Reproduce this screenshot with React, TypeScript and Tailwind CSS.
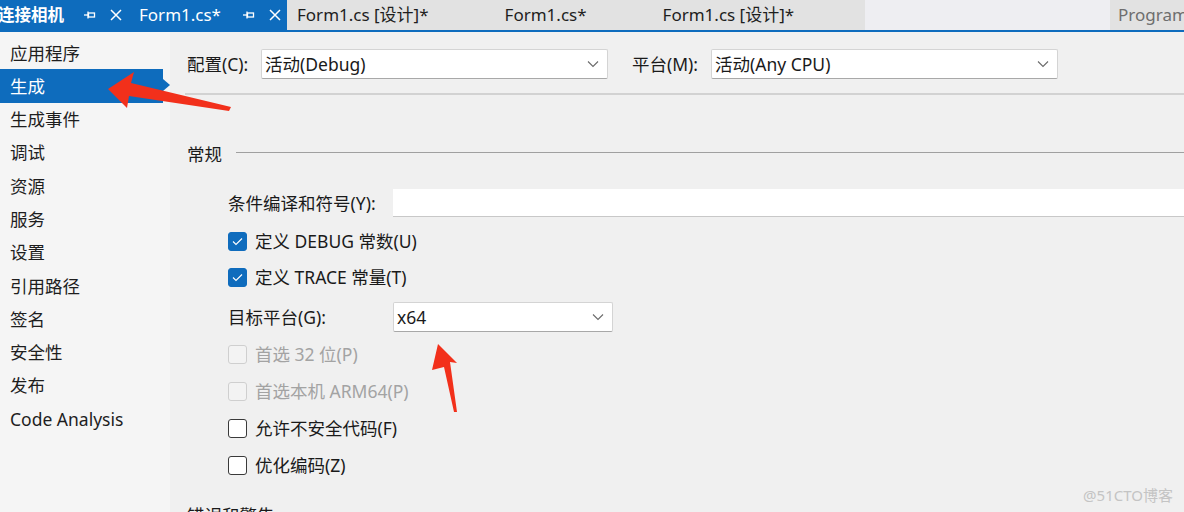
import React from "react";

const FONT = { fontFamily: '"Segoe UI", "Noto Sans", "Noto Sans CJK SC", sans-serif' };

function Pin({ color = "#fff" }: { color?: string }) {
  return (
    <svg width="12" height="10" viewBox="0 0 12 10" className="shrink-0">
      <line x1="0" y1="5" x2="4" y2="5" stroke={color} strokeWidth="1.3" />
      <line x1="4" y1="1.5" x2="4" y2="8.5" stroke={color} strokeWidth="1.3" />
      <rect x="4.5" y="3" width="6" height="4" fill="none" stroke={color} strokeWidth="1.3" />
    </svg>
  );
}

function Close({ color = "#fff" }: { color?: string }) {
  return (
    <svg width="12" height="12" viewBox="0 0 12 12" className="shrink-0">
      <path d="M1 1 L11 11 M11 1 L1 11" stroke={color} strokeWidth="1.5" />
    </svg>
  );
}

function Chevron() {
  return (
    <svg width="12" height="8" viewBox="0 0 12 8" className="shrink-0">
      <path d="M1 1.5 L6 6.5 L11 1.5" fill="none" stroke="#6a6a6a" strokeWidth="1.1" />
    </svg>
  );
}

function Select({ value, w }: { value: string; w: string }) {
  return (
    <div
      className={`${w} h-[30px] bg-white border border-[#d4d4d4] border-b-[#a8a8a8] rounded-[2px] flex items-center justify-between pl-[3px] pr-[8px] text-[17.5px] text-[#1a1a1a]`}
    >
      <span className="whitespace-nowrap">{value}</span>
      <Chevron />
    </div>
  );
}

type CbState = "checked" | "unchecked" | "disabled";

function Check({ state, label, h = "h-[37px]" }: { state: CbState; label: string; h?: string }) {
  let box = "";
  if (state === "checked") box = "bg-[#0f6cbd] border-[#0f6cbd]";
  else if (state === "unchecked") box = "bg-white border-[#3a3a3a]";
  else box = "bg-[#f3f3f3] border-[#cfcfcf]";
  return (
    <div className={`flex items-center ${h}`}>
      <div className={`w-[19px] h-[19px] rounded-[3px] border flex items-center justify-center ${box}`}>
        {state === "checked" && (
          <svg width="11" height="9" viewBox="0 0 11 9">
            <path d="M1 4.5 L4 7.5 L10 1.5" fill="none" stroke="#fff" strokeWidth="1.1" />
          </svg>
        )}
      </div>
      <span className={`ml-[8px] text-[17.5px] whitespace-nowrap ${state === "disabled" ? "text-[#a3a3a3]" : "text-[#1a1a1a]"}`}>
        {label}
      </span>
    </div>
  );
}

const navItems = ["应用程序", "生成", "生成事件", "调试", "资源", "服务", "设置", "引用路径", "签名", "安全性", "发布", "Code Analysis"];

export default function App() {
  return (
    <div className="relative w-[1184px] h-[512px] overflow-hidden bg-[#f0f0f0] flex flex-col" style={FONT}>
      {/* Tab bar */}
      <div className="h-[30px] flex items-stretch bg-[#eeeef2] shrink-0">
        <div className="bg-[#0e6cbd] flex items-center w-[130px] pr-[8px] text-white overflow-hidden">
          <span className="font-bold text-[16.5px] -ml-[2px] whitespace-nowrap">连接相机</span>
          <span className="ml-[20px]"><Pin /></span>
          <span className="ml-[14px]"><Close /></span>
        </div>
        <div className="bg-[#0e6cbd] flex items-center w-[157px] pl-[9px] text-white">
          <span className="text-[17px] whitespace-nowrap">Form1.cs*</span>
          <span className="ml-[22px]"><Pin /></span>
          <span className="ml-[14px]"><Close /></span>
        </div>
        <div className="bg-[#e2e2e2] flex items-center w-[578px] text-[17px] text-[#1e1e1e] whitespace-nowrap">
          <span className="ml-[10px]">Form1.cs [设计]*</span>
          <span className="ml-[76px]">Form1.cs*</span>
          <span className="ml-[76px]">Form1.cs [设计]*</span>
        </div>
        <div className="flex-1" />
        <div className="bg-[#e2e2e2] flex items-center w-[74px] pl-[8px] text-[17px] text-[#6e6e6e] whitespace-nowrap overflow-hidden">
          Program
        </div>
      </div>
      <div className="h-[2px] bg-[#0e6cbd] shrink-0" />

      {/* Body */}
      <div className="flex flex-1 min-h-0">
        {/* Sidebar */}
        <div className="w-[170px] bg-[#f5f5f5] pt-[4px] shrink-0">
          {navItems.map((it) => {
            const sel = it === "生成";
            return (
              <div key={it} className="relative h-[33.3px] flex items-center">
                {sel && (
                  <>
                    <div className="absolute left-0 top-0 bottom-0 w-[163px] bg-[#0e6cbd]" />
                    <div className="absolute left-[163px] top-[10px] w-0 h-0 border-y-[6px] border-y-transparent border-l-[7px] border-l-[#0e6cbd]" />
                  </>
                )}
                <span className={`relative pl-[10px] text-[17.5px] whitespace-nowrap ${sel ? "text-white" : "text-[#1e1e1e]"}`}>{it}</span>
              </div>
            );
          })}
        </div>

        {/* Main */}
        <div className="flex-1 min-w-0 pt-[17px]">
          <div className="flex items-center pl-[17px] text-[17.5px] text-[#1a1a1a]">
            <span className="w-[74px] whitespace-nowrap">配置(C):</span>
            <Select value="活动(Debug)" w="w-[347px]" />
            <span className="ml-[24px] w-[79px] whitespace-nowrap">平台(M):</span>
            <Select value="活动(Any CPU)" w="w-[347px]" />
          </div>
          <div className="ml-[15px] mt-[14px] h-[2px] bg-[#d2d2d2]" />

          <div className="flex items-center pl-[17px] mt-[46px] text-[17.5px] text-[#1a1a1a]">
            <span>常规</span>
            <div className="flex-1 h-px bg-[#a0a0a0] ml-[14px] -mt-[3px]" />
          </div>

          <div className="pl-[58px] mt-[22px]">
            <div className="flex items-center h-[28px] text-[17.5px] text-[#1a1a1a]">
              <span className="w-[165px] whitespace-nowrap">条件编译和符号(Y):</span>
              <div className="flex-1 h-[28px] bg-white border-b border-[#c8c8c8]" />
            </div>
            <div className="mt-[6px]">
              <Check state="checked" label="定义 DEBUG 常数(U)" h="h-[36px]" />
              <Check state="checked" label="定义 TRACE 常量(T)" h="h-[36px]" />
            </div>
            <div className="flex items-center h-[30px] mt-[7px] text-[17.5px] text-[#1a1a1a]">
              <span className="w-[165px] whitespace-nowrap">目标平台(G):</span>
              <Select value="x64" w="w-[220px]" />
            </div>
            <div className="mt-[3.5px]">
              <Check state="disabled" label="首选 32 位(P)" />
              <Check state="disabled" label="首选本机 ARM64(P)" />
              <Check state="unchecked" label="允许不安全代码(F)" />
              <Check state="unchecked" label="优化编码(Z)" />
            </div>
          </div>
          <div className="pl-[17px] mt-[18px] text-[17.5px] text-[#1a1a1a]">错误和警告</div>
        </div>
      </div>

      {/* Red annotation arrows */}
      <svg className="absolute left-0 top-0 pointer-events-none" width="1184" height="512">
        <polygon points="108,89 134,72 131,83 231,107 229,111 129,96 127,108" fill="#f2301b" />
        <polygon points="438,344 457,363 450,362 457,412 454,412 444,367 432,370" fill="#f2301b" />
      </svg>

      <div className="absolute right-[11px] bottom-[6px] text-[15px] text-[#c4c4c4]">@51CTO博客</div>
    </div>
  );
}
